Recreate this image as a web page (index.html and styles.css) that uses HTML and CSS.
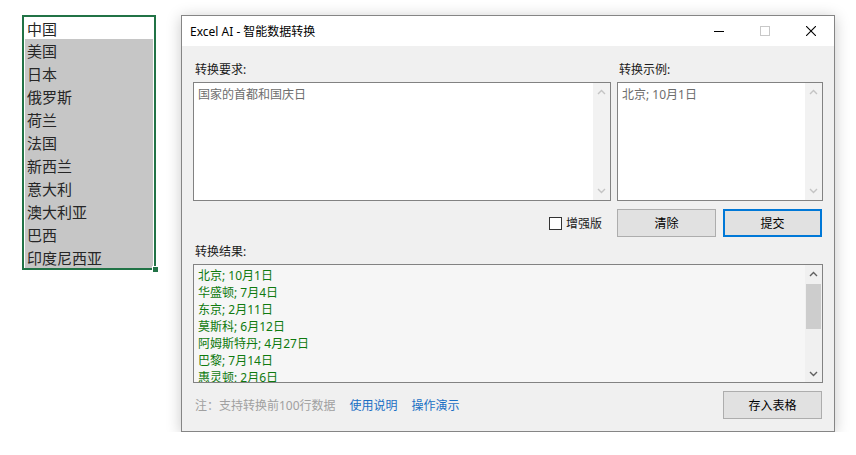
FILE: index.html
```html
<!DOCTYPE html>
<html lang="zh-CN">
<head>
    <meta charset="UTF-8">
    <title>Excel AI</title>
    <link rel="stylesheet" href="styles.css">
</head>
<body>
    <div class="page">
        <div class="sheet">
            <ul>
                <li class="cur">中国</li>
                <li>美国</li>
                <li>日本</li>
                <li>俄罗斯</li>
                <li>荷兰</li>
                <li>法国</li>
                <li>新西兰</li>
                <li>意大利</li>
                <li>澳大利亚</li>
                <li>巴西</li>
                <li>印度尼西亚</li>
            </ul>
            <span class="handle"></span>
        </div>

        <div class="win">
            <div class="title-bar">
                <span class="title">Excel AI - 智能数据转换</span>
                <div class="ctrls">
                    <span class="ctrl"><svg width="10" height="10" viewBox="0 0 10 10"><path d="M0 5.5h10" stroke="#000" stroke-width="1"/></svg></span>
                    <span class="ctrl"><svg width="10" height="10" viewBox="0 0 10 10"><rect x="0.5" y="0.5" width="9" height="9" fill="none" stroke="#c8c8c8" stroke-width="1"/></svg></span>
                    <span class="ctrl"><svg width="10" height="10" viewBox="0 0 10 10"><path d="M0 0L10 10M10 0L0 10" stroke="#000" stroke-width="1.1"/></svg></span>
                </div>
            </div>

            <div class="body">
                <div class="cols">
                    <div class="field">
                        <div class="lbl">转换要求:</div>
                        <div class="box">
                            <div class="txt hint">国家的首都和国庆日</div>
                            <div class="sbar off">
                                <svg width="9" height="6" viewBox="0 0 9 6"><path d="M1 5L4.5 1.5L8 5" fill="none" stroke="#c4c4c4" stroke-width="1.4"/></svg>
                                <svg width="9" height="6" viewBox="0 0 9 6"><path d="M1 1L4.5 4.5L8 1" fill="none" stroke="#c4c4c4" stroke-width="1.4"/></svg>
                            </div>
                        </div>
                    </div>
                    <div class="field">
                        <div class="lbl">转换示例:</div>
                        <div class="box">
                            <div class="txt hint">北京; 10月1日</div>
                            <div class="sbar off">
                                <svg width="9" height="6" viewBox="0 0 9 6"><path d="M1 5L4.5 1.5L8 5" fill="none" stroke="#c4c4c4" stroke-width="1.4"/></svg>
                                <svg width="9" height="6" viewBox="0 0 9 6"><path d="M1 1L4.5 4.5L8 1" fill="none" stroke="#c4c4c4" stroke-width="1.4"/></svg>
                            </div>
                        </div>
                    </div>
                </div>

                <div class="cols actions">
                    <label class="chk"><span class="chk-box"></span>增强版</label>
                    <div class="btns">
                        <button class="btn">清除</button>
                        <button class="btn primary">提交</button>
                    </div>
                </div>

                <div class="lbl result-lbl">转换结果:</div>
                <div class="box result">
                    <div class="txt lines">
                        <p>北京; 10月1日</p>
                        <p>华盛顿; 7月4日</p>
                        <p>东京; 2月11日</p>
                        <p>莫斯科; 6月12日</p>
                        <p>阿姆斯特丹; 4月27日</p>
                        <p>巴黎; 7月14日</p>
                        <p>惠灵顿; 2月6日</p>
                    </div>
                    <div class="sbar">
                        <svg width="9" height="6" viewBox="0 0 9 6"><path d="M1 5L4.5 1.5L8 5" fill="none" stroke="#606060" stroke-width="1.4"/></svg>
                        <span class="thumb"></span>
                        <span class="fill"></span>
                        <svg width="9" height="6" viewBox="0 0 9 6"><path d="M1 1L4.5 4.5L8 1" fill="none" stroke="#606060" stroke-width="1.4"/></svg>
                    </div>
                </div>

                <div class="foot">
                    <span class="note">注：支持转换前100行数据</span>
                    <a class="link">使用说明</a>
                    <a class="link">操作演示</a>
                    <button class="btn save">存入表格</button>
                </div>
            </div>
        </div>
    </div>
</body>
</html>
```

FILE: styles.css
```css
*{
    padding: 0;
    margin: 0;
    box-sizing: border-box;
}
li{
    list-style: none;
}
body{
    background-color: #fff;
    font-family: "Noto Sans", "Noto Sans CJK SC", sans-serif;
    font-size: 12px;
    color: #000;
}
.page{
    display: flex;
    align-items: flex-start;
    padding: 15px 0 0 22px;
    gap: 25px;
}

/* 表格选区 */
.sheet{
    position: relative;
    width: 134px;
    border: 2px solid #217346;
    background-color: #c6c6c6;
    font-family: "Noto Sans CJK SC", sans-serif;
    font-size: 15px;
    color: #262626;
}
.sheet li{
    height: 23px;
    line-height: 23px;
    padding-left: 2px;
    border-left: 1px solid #fff;
    border-right: 1px solid #fff;
}
.sheet li:last-child{
    height: 22px;
}
.sheet .cur{
    background-color: #fff;
    border-top: 1px solid #fff;
    height: 22px;
    line-height: 22px;
}
.handle{
    position: absolute;
    right: -5px;
    bottom: -5px;
    width: 7px;
    height: 7px;
    background-color: #217346;
    border: 1px solid #fff;
}

/* 窗口 */
.win{
    width: 654px;
    border: 1px solid #858585;
    background-color: #f0f0f0;
    box-shadow: 0 2px 14px rgba(0,0,0,.22);
}
.title-bar{
    height: 30px;
    background-color: #fff;
    display: flex;
    align-items: center;
    padding-left: 8px;
}
.title{
    flex: 1;
    font-size: 12px;
}
.ctrls{
    display: flex;
    height: 100%;
}
.ctrl{
    width: 46px;
    display: flex;
    align-items: center;
    justify-content: center;
}
.body{
    padding: 16px 11px 12px 11px;
}
.cols{
    display: grid;
    grid-template-columns: 418px 206px;
    column-gap: 6px;
}
.lbl{
    height: 16px;
    line-height: 16px;
    padding-left: 2px;
    margin-bottom: 4px;
    color: #1a1a1a;
}
.box{
    display: flex;
    height: 119px;
    border: 1px solid #828282;
    background-color: #fff;
    overflow: hidden;
}
.txt{
    flex: 1;
    padding: 3px 4px;
    line-height: 17px;
}
.hint{
    color: #6d6d6d;
}
.sbar{
    width: 17px;
    background-color: #f0f0f0;
    display: flex;
    flex-direction: column;
    align-items: center;
    justify-content: space-between;
    padding: 6px 0;
}
.sbar.off{
    background-color: #f2f2f2;
}

/* 按钮行 */
.actions{
    margin-top: 8px;
    height: 28px;
}
.chk{
    display: flex;
    align-items: center;
    justify-content: flex-end;
    padding-right: 9px;
    gap: 4px;
    color: #1a1a1a;
}
.chk-box{
    width: 13px;
    height: 13px;
    border: 1px solid #333;
    background-color: #fff;
}
.btns{
    display: flex;
    gap: 7px;
}
.btn{
    width: 99px;
    height: 28px;
    border: 1px solid #adadad;
    background-color: #e1e1e1;
    font-family: inherit;
    font-size: 12px;
    color: #000;
}
.btn.primary{
    border: 2px solid #0078d7;
}

/* 结果 */
.result-lbl{
    margin-top: 7px;
}
.result{
    width: 630px;
    background-color: #f6f6f6;
}
.lines{
    padding: 2px 4px;
    color: #0f7a0f;
}
.lines p{
    height: 17px;
    line-height: 17px;
    white-space: nowrap;
}
.result .sbar{
    padding: 6px 0 5px;
    justify-content: flex-start;
    background-color: #f0f0f0;
}
.thumb{
    width: 15px;
    height: 45px;
    margin-top: 7px;
    background-color: #cdcdcd;
}
.fill{
    flex: 1;
}

.foot{
    display: flex;
    align-items: center;
    margin-top: 8px;
    height: 28px;
    padding-left: 2px;
}
.note{
    color: #a0a0a0;
    margin-right: 14px;
}
.link{
    color: #1a6fc4;
    margin-right: 14px;
}
.save{
    margin-left: auto;
    margin-right: 1px;
}
```
